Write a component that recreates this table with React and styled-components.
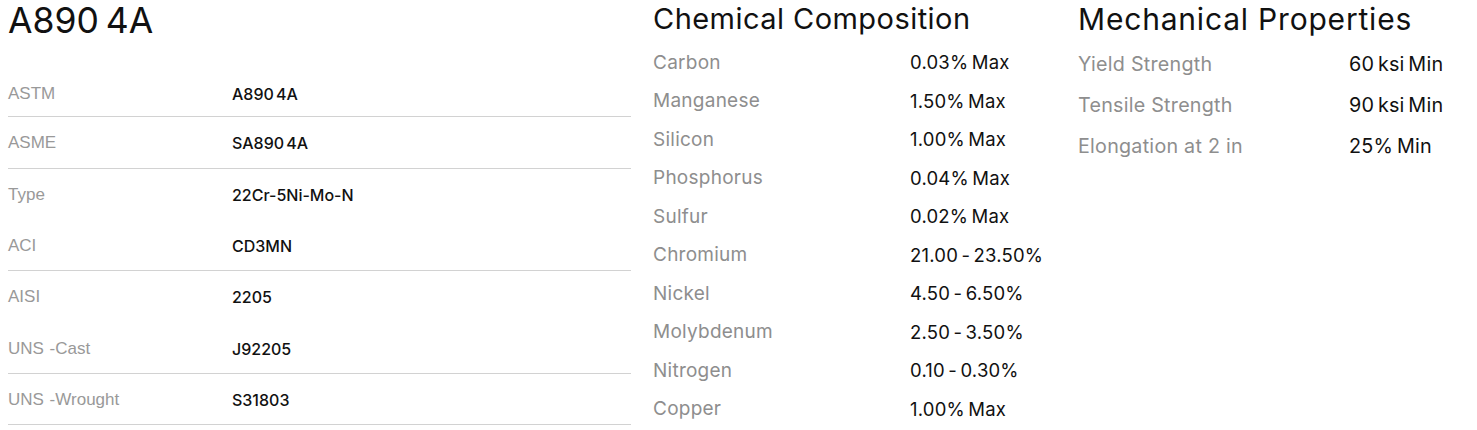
import React from "react";
import styled, { createGlobalStyle } from "styled-components";

const Global = createGlobalStyle`
  html, body { margin: 0; padding: 0; background: #fff; }
  body { font-family: Inter, "Noto Sans", sans-serif; color: #111; }
`;

const Page = styled.div`
  display: grid;
  grid-template-columns: 623px 403px 399px;
  column-gap: 22px;
  padding: 0 0 0 8px;
  width: 1477px;
  box-sizing: border-box;
`;

const Column = styled.section`
  display: flex;
  flex-direction: column;
`;

const Title = styled.h1`
  margin: 0;
  font-family: Inter, sans-serif;
  font-weight: 400;
  font-size: 35.5px;
  line-height: 42px;
  word-spacing: -3px;
  color: #111;
`;

const SpecTable = styled.div`
  display: flex;
  flex-direction: column;
  margin-top: 24px;
`;

const SpecRow = styled.div`
  display: grid;
  grid-template-columns: 224px 1fr;
  align-items: center;
  height: 51.3px;
  padding-top: ${(p) => (p.$first ? 5 : 2)}px;
  border-bottom: 1px solid ${(p) => (p.$line ? "#d2d2d2" : "transparent")};
  box-sizing: border-box;
`;

const SpecLabel = styled.span`
  font-family: "Liberation Sans", Arial, sans-serif;
  font-weight: 400;
  font-size: 17px;
  word-spacing: 1px;
  color: #999;
`;

const SpecValue = styled.span`
  font-family: Inter, sans-serif;
  font-weight: 500;
  font-size: 16px;
  word-spacing: -2px;
  color: #111;
`;

const Heading = styled.h2`
  margin: 0;
  font-family: Inter, sans-serif;
  font-weight: 400;
  font-size: ${(p) => p.$size}px;
  letter-spacing: ${(p) => p.$track}px;
  line-height: 38px;
  color: #111;
`;

const PropList = styled.div`
  display: flex;
  flex-direction: column;
  margin-top: ${(p) => p.$top}px;
`;

const PropRow = styled.div`
  display: grid;
  grid-template-columns: ${(p) => p.$labelWidth}px 1fr;
  align-items: center;
  height: ${(p) => p.$h}px;
`;

const PropLabel = styled.span`
  font-family: Inter, sans-serif;
  font-weight: 400;
  font-size: ${(p) => p.$size}px;
  letter-spacing: 0.25px;
  color: #8e8e8e;
  white-space: nowrap;
`;

const PropValue = styled.span`
  font-family: Inter, sans-serif;
  font-weight: 400;
  font-size: ${(p) => p.$size}px;
  letter-spacing: 0.2px;
  word-spacing: -2px;
  color: #111;
  white-space: nowrap;
`;

const specs = [
  ["ASTM", "A890 4A", true],
  ["ASME", "SA890 4A", true],
  ["Type", "22Cr-5Ni-Mo-N", false],
  ["ACI", "CD3MN", true],
  ["AISI", "2205", false],
  ["UNS -Cast", "J92205", true],
  ["UNS -Wrought", "S31803", true],
];

const chem = [
  ["Carbon", "0.03% Max"],
  ["Manganese", "1.50% Max"],
  ["Silicon", "1.00% Max"],
  ["Phosphorus", "0.04% Max"],
  ["Sulfur", "0.02% Max"],
  ["Chromium", "21.00 - 23.50%"],
  ["Nickel", "4.50 - 6.50%"],
  ["Molybdenum", "2.50 - 3.50%"],
  ["Nitrogen", "0.10 - 0.30%"],
  ["Copper", "1.00% Max"],
];

const mech = [
  ["Yield Strength", "60 ksi Min"],
  ["Tensile Strength", "90 ksi Min"],
  ["Elongation at 2 in", "25% Min"],
];

export default function App() {
  return (
    <>
      <Global />
      <Page>
        <Column>
          <Title>A890 4A</Title>
          <SpecTable>
            {specs.map(([l, v, line], i) => (
              <SpecRow key={l} $line={line} $first={i === 0}>
                <SpecLabel>{l}</SpecLabel>
                <SpecValue>{v}</SpecValue>
              </SpecRow>
            ))}
          </SpecTable>
        </Column>
        <Column>
          <Heading $size={29} $track={0.45}>Chemical Composition</Heading>
          <PropList $top={5}>
            {chem.map(([l, v]) => (
              <PropRow key={l} $labelWidth={257} $h={38.5}>
                <PropLabel $size={19}>{l}</PropLabel>
                <PropValue $size={18.5}>{v}</PropValue>
              </PropRow>
            ))}
          </PropList>
        </Column>
        <Column>
          <Heading $size={30} $track={0.8}>Mechanical Properties</Heading>
          <PropList $top={5}>
            {mech.map(([l, v]) => (
              <PropRow key={l} $labelWidth={271} $h={41}>
                <PropLabel $size={19.7}>{l}</PropLabel>
                <PropValue $size={19.8}>{v}</PropValue>
              </PropRow>
            ))}
          </PropList>
        </Column>
      </Page>
    </>
  );
}
